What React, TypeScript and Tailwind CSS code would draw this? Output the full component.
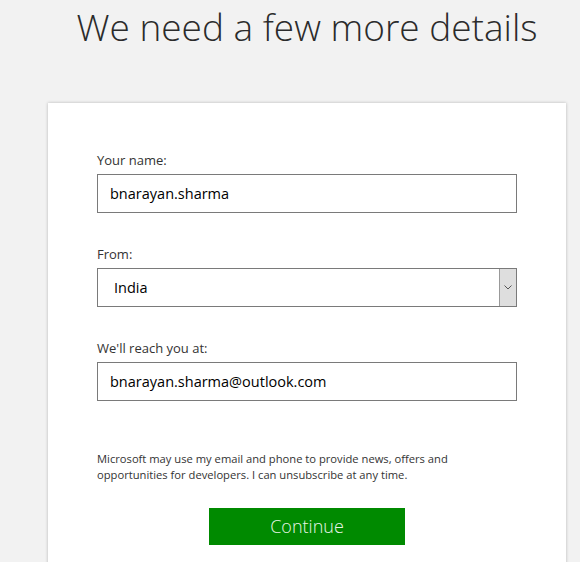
export default function App() {
  return (
    <div className="h-[562px] w-full overflow-hidden bg-[#f2f2f2] pl-[48px] font-['Open_Sans',sans-serif]">
      <div className="w-[518px]">
        <h1 className="pt-[1px] text-center text-[37px] font-light leading-[52px] text-[#2b2b2b]">
          We need a few more details
        </h1>

        <div className="mt-[50px] bg-white px-[49px] pt-[47px] pb-[40px] shadow-[0_0_3px_rgba(0,0,0,0.25)]">
          <label className="block text-[13px] leading-[20px] text-[#333]">Your name:</label>
          <div className="mt-[4px] flex h-[39px] items-center border border-[#7a7a7a] px-[12px] text-[14.5px] text-black">
            bnarayan.sharma
          </div>

          <label className="mt-[31px] block text-[13px] leading-[20px] text-[#333]">From:</label>
          <div className="mt-[4px] flex h-[39px] border border-[#7a7a7a] text-[14.5px] text-black">
            <div className="flex flex-1 items-center pl-[16px]">India</div>
            <div className="flex w-[17px] items-center justify-center border-l border-[#999] bg-[#dedede]">
              <svg width="8" height="5" viewBox="0 0 8 5" fill="none" stroke="#555" strokeWidth="1">
                <path d="M0.5 0.5 L4 4 L7.5 0.5" />
              </svg>
            </div>
          </div>

          <label className="mt-[31px] block text-[13px] leading-[20px] text-[#333]">We'll reach you at:</label>
          <div className="mt-[4px] flex h-[39px] items-center border border-[#7a7a7a] px-[12px] text-[14.5px] text-black">
            bnarayan.sharma@outlook.com
          </div>

          <p className="mt-[50px] text-[11.2px] leading-[16px] text-[#333]">
            Microsoft may use my email and phone to provide news, offers and
            <br />
            opportunities for developers. I can unsubscribe at any time.
          </p>

          <div className="mt-[25px] flex justify-center">
            <button className="h-[37px] w-[196px] bg-[#008a00] text-[18px] font-light text-[#e8f5e8]">
              Continue
            </button>
          </div>
        </div>
      </div>
    </div>
  )
}
